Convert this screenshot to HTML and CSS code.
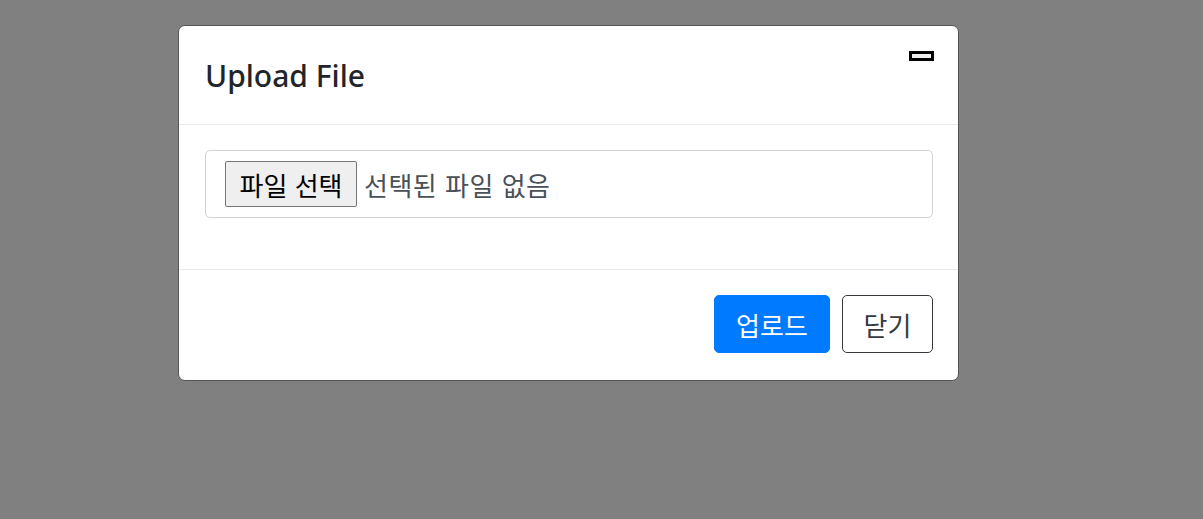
FILE: index.html
```html
<!DOCTYPE html>
<html lang="ko">
<head>
    <meta charset="UTF-8">
    <meta name="viewport" content="width=device-width, initial-scale=1.0">
    <title>Upload File</title>
    <link rel="stylesheet" href="styles.css">
</head>
<body>
    <div class="modal">
        <div class="modal-header">
            <h4 class="modal-title">Upload File</h4>
            <button type="button" class="btn-close" aria-label="Close"></button>
        </div>
        <div class="modal-body">
            <div class="file-input">
                <span class="file-button">파일 선택</span>
                <span class="file-name">선택된 파일 없음</span>
            </div>
        </div>
        <div class="modal-footer">
            <button type="button" class="btn btn-primary">업로드</button>
            <button type="button" class="btn btn-outline">닫기</button>
        </div>
    </div>
</body>
</html>
```

FILE: styles.css
```css
body {
    margin: 0;
    background-color: #808080;
    font-family: 'Noto Sans', 'Noto Sans CJK KR', sans-serif;
    color: #212529;
    min-height: 519px;
}
.modal {
    box-sizing: border-box;
    width: 781px;
    margin: 25px 0 0 178px;
    background-color: #fff;
    border: 1px solid #555;
    border-radius: 7px;
}
.modal-header {
    height: 98px;
    padding: 0 24px 0 26px;
    display: flex;
    align-items: flex-start;
    justify-content: space-between;
    border-bottom: 1px solid #e9ecef;
}
.modal-title {
    margin: 29px 0 0;
    font-size: 30px;
    font-weight: 500;
    line-height: 42px;
}
.btn-close {
    margin-top: 25px;
    width: 25px;
    height: 10px;
    padding: 0;
    border: 3px solid #000;
    background-color: #efefef;
}
.modal-body {
    padding: 25px 25px 51px 26px;
    border-bottom: 1px solid #e9ecef;
}
.file-input {
    height: 68px;
    box-sizing: border-box;
    border: 1px solid #ced4da;
    border-radius: 5px;
    display: flex;
    align-items: center;
    padding-left: 19px;
    font-family: 'Noto Sans CJK KR', sans-serif;
}
.file-button {
    box-sizing: border-box;
    height: 46px;
    width: 132px;
    display: flex;
    align-items: center;
    justify-content: center;
    background-color: #efefef;
    border: 1px solid #767676;
    border-radius: 2px;
    color: #000;
    font-size: 26px;
}
.file-name {
    margin-left: 7px;
    color: #495057;
    font-size: 26px;
    letter-spacing: 0.5px;
}
.modal-footer {
    padding: 25px 25px 27px;
    display: flex;
    justify-content: flex-end;
    gap: 12px;
}
.btn {
    box-sizing: border-box;
    height: 58px;
    border-radius: 5px;
    font-family: 'Noto Sans CJK KR', sans-serif;
    font-size: 26px;
    cursor: pointer;
}
.btn-primary {
    width: 116px;
    background-color: #007bff;
    border: 1px solid #007bff;
    color: #fff;
}
.btn-outline {
    width: 91px;
    background-color: #fff;
    border: 1px solid #343a40;
    color: #343a40;
}
```
